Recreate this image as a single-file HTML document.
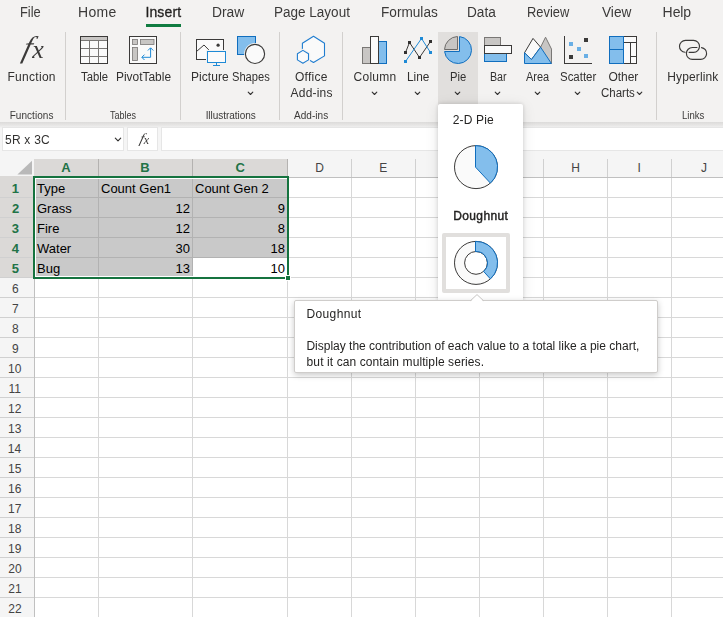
<!DOCTYPE html>
<html lang="en">
<head>
<meta charset="utf-8">
<title>Excel - Insert Doughnut chart</title>
<style>
html,body{margin:0;padding:0;}
body{width:723px;height:617px;overflow:hidden;position:relative;background:#fff;font-family:"Liberation Sans",sans-serif;}
.abs{position:absolute;}
#ui{position:absolute;left:0;top:0;width:723px;height:617px;will-change:transform;}
.t{position:absolute;white-space:pre;font-family:"Liberation Sans",sans-serif;}
#chrome{position:absolute;left:0;top:0;width:723px;height:122px;background:#f3f2f1;}
#shadow{position:absolute;left:0;top:122px;width:723px;height:6px;background:linear-gradient(#dcdbda,#e6e5e4 50%,#f3f3f3);z-index:0;}
#fbar{position:absolute;left:0;top:126px;width:723px;height:34px;background:#f5f5f5;}
.wbox{position:absolute;background:#fff;top:127px;height:24px;box-sizing:border-box;border:1px solid #e6e6e6;}
.fx{font-family:"Liberation Serif",serif !important;font-style:italic;color:#3b3a39;}
.sep{position:absolute;top:32px;width:1px;height:88px;background:#d2d0ce;}
#tabline{position:absolute;left:145.6px;top:23.6px;width:35.6px;height:3px;background:#107c41;}
#piebg{position:absolute;left:438px;top:32px;width:40px;height:73px;background:#e1dfdd;}
#colhdr{position:absolute;left:0;top:159px;width:723px;height:18px;background:#f5f5f5;}
#rowhdr{position:absolute;left:0;top:159px;width:34px;height:458px;background:#f5f5f5;}
#selcol{position:absolute;left:34px;top:159px;width:254px;height:18px;background:#dbd9d7;}
#selrow{position:absolute;left:0;top:176px;width:34px;height:102px;background:#dbd9d7;}
#grid{position:absolute;left:0;top:0;}
.c{position:absolute;white-space:pre;font-family:"Liberation Sans",sans-serif;font-size:13px;line-height:20px;color:#000;}
#panel{position:absolute;left:438px;top:104px;width:85px;height:197px;background:#fff;border-radius:2px 2px 0 0;box-shadow:0 0 4px rgba(0,0,0,.16),0 2px 14px rgba(0,0,0,.10);}
#tip{position:absolute;left:294px;top:300px;width:364px;height:73px;background:#fff;border:1px solid #cfcdcb;box-sizing:border-box;border-radius:2px;box-shadow:0 2px 6px rgba(0,0,0,.22);}
#dsel{position:absolute;left:442px;top:233px;width:68px;height:60px;box-sizing:border-box;border:4px solid #e1dfdd;background:#fff;border-radius:2px;}
</style>
</head>
<body>
<div id="chrome"></div>
<div id="fbar"></div>
<div id="shadow"></div>
<div id="colhdr"></div>
<div id="rowhdr"></div>
<div id="selcol"></div>
<div id="selrow"></div>
<svg id="grid" class="abs" width="723" height="617" viewBox="0 0 723 617" shape-rendering="crispEdges">
<rect x="98" y="178" width="1" height="439" fill="#d8d8d8"/>
<rect x="192" y="178" width="1" height="439" fill="#d8d8d8"/>
<rect x="287" y="178" width="1" height="439" fill="#d8d8d8"/>
<rect x="351" y="178" width="1" height="439" fill="#d8d8d8"/>
<rect x="415" y="178" width="1" height="439" fill="#d8d8d8"/>
<rect x="479" y="178" width="1" height="439" fill="#d8d8d8"/>
<rect x="543" y="178" width="1" height="439" fill="#d8d8d8"/>
<rect x="607" y="178" width="1" height="439" fill="#d8d8d8"/>
<rect x="671" y="178" width="1" height="439" fill="#d8d8d8"/>
<rect x="34" y="197" width="689" height="1" fill="#d8d8d8"/>
<rect x="34" y="217" width="689" height="1" fill="#d8d8d8"/>
<rect x="34" y="237" width="689" height="1" fill="#d8d8d8"/>
<rect x="34" y="257" width="689" height="1" fill="#d8d8d8"/>
<rect x="34" y="277" width="689" height="1" fill="#d8d8d8"/>
<rect x="34" y="297" width="689" height="1" fill="#d8d8d8"/>
<rect x="34" y="317" width="689" height="1" fill="#d8d8d8"/>
<rect x="34" y="337" width="689" height="1" fill="#d8d8d8"/>
<rect x="34" y="357" width="689" height="1" fill="#d8d8d8"/>
<rect x="34" y="377" width="689" height="1" fill="#d8d8d8"/>
<rect x="34" y="397" width="689" height="1" fill="#d8d8d8"/>
<rect x="34" y="417" width="689" height="1" fill="#d8d8d8"/>
<rect x="34" y="437" width="689" height="1" fill="#d8d8d8"/>
<rect x="34" y="457" width="689" height="1" fill="#d8d8d8"/>
<rect x="34" y="477" width="689" height="1" fill="#d8d8d8"/>
<rect x="34" y="497" width="689" height="1" fill="#d8d8d8"/>
<rect x="34" y="517" width="689" height="1" fill="#d8d8d8"/>
<rect x="34" y="537" width="689" height="1" fill="#d8d8d8"/>
<rect x="34" y="557" width="689" height="1" fill="#d8d8d8"/>
<rect x="34" y="577" width="689" height="1" fill="#d8d8d8"/>
<rect x="34" y="597" width="689" height="1" fill="#d8d8d8"/>
<rect x="34" y="617" width="689" height="1" fill="#d8d8d8"/>
<rect x="35" y="178" width="252" height="99" fill="#fff"/>
<rect x="36" y="179" width="251" height="97" fill="#c9c9c9"/>
<rect x="193" y="258" width="94" height="18" fill="#fff"/>
<rect x="98" y="179" width="1" height="97" fill="#b2b2b2"/>
<rect x="192" y="179" width="1" height="97" fill="#b2b2b2"/>
<rect x="36" y="197" width="251" height="1" fill="#b2b2b2"/>
<rect x="36" y="217" width="251" height="1" fill="#b2b2b2"/>
<rect x="36" y="237" width="251" height="1" fill="#b2b2b2"/>
<rect x="36" y="257" width="251" height="1" fill="#b2b2b2"/>
<rect x="193" y="257" width="94" height="1" fill="#b2b2b2"/>
<rect x="98" y="159" width="1" height="18" fill="#b4b2b0"/>
<rect x="192" y="159" width="1" height="18" fill="#b4b2b0"/>
<rect x="287" y="159" width="1" height="18" fill="#b4b2b0"/>
<rect x="351" y="159" width="1" height="18" fill="#d0d0d0"/>
<rect x="415" y="159" width="1" height="18" fill="#d0d0d0"/>
<rect x="479" y="159" width="1" height="18" fill="#d0d0d0"/>
<rect x="543" y="159" width="1" height="18" fill="#d0d0d0"/>
<rect x="607" y="159" width="1" height="18" fill="#d0d0d0"/>
<rect x="671" y="159" width="1" height="18" fill="#d0d0d0"/>
<rect x="0" y="197" width="34" height="1" fill="#d0d0d0"/>
<rect x="0" y="217" width="34" height="1" fill="#d0d0d0"/>
<rect x="0" y="237" width="34" height="1" fill="#d0d0d0"/>
<rect x="0" y="257" width="34" height="1" fill="#d0d0d0"/>
<rect x="0" y="277" width="34" height="1" fill="#d0d0d0"/>
<rect x="0" y="297" width="34" height="1" fill="#d0d0d0"/>
<rect x="0" y="317" width="34" height="1" fill="#d0d0d0"/>
<rect x="0" y="337" width="34" height="1" fill="#d0d0d0"/>
<rect x="0" y="357" width="34" height="1" fill="#d0d0d0"/>
<rect x="0" y="377" width="34" height="1" fill="#d0d0d0"/>
<rect x="0" y="397" width="34" height="1" fill="#d0d0d0"/>
<rect x="0" y="417" width="34" height="1" fill="#d0d0d0"/>
<rect x="0" y="437" width="34" height="1" fill="#d0d0d0"/>
<rect x="0" y="457" width="34" height="1" fill="#d0d0d0"/>
<rect x="0" y="477" width="34" height="1" fill="#d0d0d0"/>
<rect x="0" y="497" width="34" height="1" fill="#d0d0d0"/>
<rect x="0" y="517" width="34" height="1" fill="#d0d0d0"/>
<rect x="0" y="537" width="34" height="1" fill="#d0d0d0"/>
<rect x="0" y="557" width="34" height="1" fill="#d0d0d0"/>
<rect x="0" y="577" width="34" height="1" fill="#d0d0d0"/>
<rect x="0" y="597" width="34" height="1" fill="#d0d0d0"/>
<rect x="0" y="617" width="34" height="1" fill="#d0d0d0"/>
<rect x="34" y="279" width="1" height="338" fill="#c0c0c0"/>
<rect x="34" y="177" width="689" height="1" fill="#c0c0c0"/>
<polygon points="32,160.8 32,174.6 17.4,174.6" fill="#b9b9b9" shape-rendering="geometricPrecision"/>
<rect x="34" y="177" width="254" height="101" fill="none" stroke="#15733f" stroke-width="2"/>
<rect x="285" y="275" width="6" height="6" fill="#fff"/>
<rect x="286" y="276" width="4" height="4" fill="#15733f"/>
</svg>
<span class="c" style="left:37px;top:179px">Type</span>
<span class="c" style="left:101px;top:179px">Count Gen1</span>
<span class="c" style="left:195px;top:179px">Count Gen 2</span>
<span class="c" style="left:37px;top:199px">Grass</span>
<span class="c" style="right:533px;top:199px">12</span>
<span class="c" style="right:438px;top:199px">9</span>
<span class="c" style="left:37px;top:219px">Fire</span>
<span class="c" style="right:533px;top:219px">12</span>
<span class="c" style="right:438px;top:219px">8</span>
<span class="c" style="left:37px;top:239px">Water</span>
<span class="c" style="right:533px;top:239px">30</span>
<span class="c" style="right:438px;top:239px">18</span>
<span class="c" style="left:37px;top:259px">Bug</span>
<span class="c" style="right:533px;top:259px">13</span>
<span class="c" style="right:438px;top:259px">10</span>
<span class="t" style="left:315.13px;top:162.34px;font-size:12px;line-height:12px;font-weight:400;color:#444;letter-spacing:0.000px">D</span>
<span class="t" style="left:379.25px;top:162.34px;font-size:12px;line-height:12px;font-weight:400;color:#444;letter-spacing:0.000px">E</span>
<span class="t" style="left:443.62px;top:162.34px;font-size:12px;line-height:12px;font-weight:400;color:#444;letter-spacing:0.000px">F</span>
<span class="t" style="left:507.01px;top:162.34px;font-size:12px;line-height:12px;font-weight:400;color:#444;letter-spacing:0.000px">G</span>
<span class="t" style="left:571.17px;top:162.34px;font-size:12px;line-height:12px;font-weight:400;color:#444;letter-spacing:0.000px">H</span>
<span class="t" style="left:637.51px;top:162.34px;font-size:12px;line-height:12px;font-weight:400;color:#444;letter-spacing:0.000px">I</span>
<span class="t" style="left:700.94px;top:162.34px;font-size:12px;line-height:12px;font-weight:400;color:#444;letter-spacing:0.000px">J</span>
<span class="t" style="left:61.31px;top:160.60px;font-size:13px;line-height:13px;font-weight:700;color:#217346;letter-spacing:0.000px">A</span>
<span class="t" style="left:140.19px;top:160.60px;font-size:13px;line-height:13px;font-weight:700;color:#217346;letter-spacing:0.000px">B</span>
<span class="t" style="left:235.40px;top:160.60px;font-size:13px;line-height:13px;font-weight:700;color:#217346;letter-spacing:0.000px">C</span>
<span class="t" style="left:11.69px;top:181.50px;font-size:13px;line-height:13px;font-weight:700;color:#217346;letter-spacing:0.000px">1</span>
<span class="t" style="left:11.88px;top:201.50px;font-size:13px;line-height:13px;font-weight:700;color:#217346;letter-spacing:0.000px">2</span>
<span class="t" style="left:11.79px;top:221.50px;font-size:13px;line-height:13px;font-weight:700;color:#217346;letter-spacing:0.000px">3</span>
<span class="t" style="left:11.71px;top:241.50px;font-size:13px;line-height:13px;font-weight:700;color:#217346;letter-spacing:0.000px">4</span>
<span class="t" style="left:11.74px;top:261.50px;font-size:13px;line-height:13px;font-weight:700;color:#217346;letter-spacing:0.000px">5</span>
<span class="t" style="left:12.06px;top:283.14px;font-size:12px;line-height:12px;font-weight:400;color:#444;letter-spacing:0.000px">6</span>
<span class="t" style="left:12.08px;top:303.14px;font-size:12px;line-height:12px;font-weight:400;color:#444;letter-spacing:0.000px">7</span>
<span class="t" style="left:12.08px;top:323.14px;font-size:12px;line-height:12px;font-weight:400;color:#444;letter-spacing:0.000px">8</span>
<span class="t" style="left:12.06px;top:343.14px;font-size:12px;line-height:12px;font-weight:400;color:#444;letter-spacing:0.000px">9</span>
<span class="t" style="left:8.07px;top:363.14px;font-size:12px;line-height:12px;font-weight:400;color:#444;letter-spacing:0.000px">10</span>
<span class="t" style="left:8.54px;top:383.14px;font-size:12px;line-height:12px;font-weight:400;color:#444;letter-spacing:0.000px">11</span>
<span class="t" style="left:8.04px;top:403.14px;font-size:12px;line-height:12px;font-weight:400;color:#444;letter-spacing:0.000px">12</span>
<span class="t" style="left:8.07px;top:423.14px;font-size:12px;line-height:12px;font-weight:400;color:#444;letter-spacing:0.000px">13</span>
<span class="t" style="left:7.85px;top:443.14px;font-size:12px;line-height:12px;font-weight:400;color:#444;letter-spacing:0.000px">14</span>
<span class="t" style="left:8.07px;top:463.14px;font-size:12px;line-height:12px;font-weight:400;color:#444;letter-spacing:0.000px">15</span>
<span class="t" style="left:8.08px;top:483.14px;font-size:12px;line-height:12px;font-weight:400;color:#444;letter-spacing:0.000px">16</span>
<span class="t" style="left:8.04px;top:503.14px;font-size:12px;line-height:12px;font-weight:400;color:#444;letter-spacing:0.000px">17</span>
<span class="t" style="left:8.07px;top:523.14px;font-size:12px;line-height:12px;font-weight:400;color:#444;letter-spacing:0.000px">18</span>
<span class="t" style="left:8.04px;top:543.14px;font-size:12px;line-height:12px;font-weight:400;color:#444;letter-spacing:0.000px">19</span>
<span class="t" style="left:8.29px;top:563.14px;font-size:12px;line-height:12px;font-weight:400;color:#444;letter-spacing:0.000px">20</span>
<span class="t" style="left:8.25px;top:583.14px;font-size:12px;line-height:12px;font-weight:400;color:#444;letter-spacing:0.000px">21</span>
<span class="t" style="left:8.25px;top:603.14px;font-size:12px;line-height:12px;font-weight:400;color:#444;letter-spacing:0.000px">22</span>
<div id="ui">
<div id="tabline"></div>
<div id="piebg"></div>
<div class="sep" style="left:65px"></div>
<div class="sep" style="left:180px"></div>
<div class="sep" style="left:279px"></div>
<div class="sep" style="left:342px"></div>
<div class="sep" style="left:656px"></div>
<div class="wbox" style="left:2px;width:122px"></div>
<div class="wbox" style="left:127px;width:31px"></div>
<div class="wbox" style="left:161px;width:564px"></div>
<span class="t fx" style="left:28px;top:32px;font-size:30px;line-height:30px;transform:skewX(-15deg);transform-origin:0 0">f</span><span class="t fx" style="left:32.2px;top:37px;font-size:26px;line-height:26px">x</span>
<span class="t fx" style="left:141.6px;top:132px;font-size:14px;line-height:14px;transform:skewX(-15deg);transform-origin:0 0">f</span><span class="t fx" style="left:143.7px;top:134.4px;font-size:12px;line-height:12px">x</span>
<svg class="abs" style="left:0;top:0" width="723" height="126" viewBox="0 0 723 126" fill="none">
<!-- Table -->
<g>
<rect x="80.5" y="36.5" width="27" height="27" fill="#fafafa" stroke="#3b3a39"/>
<rect x="81" y="37" width="26" height="3.5" fill="#c8c6c4"/>
<path d="M81 40.5H107M81 48.5H107M81 56.5H107M89.5 41V63M98.5 41V63" stroke="#797775" stroke-width="1"/>
<rect x="80.5" y="36.5" width="27" height="27" stroke="#3b3a39"/>
</g>
<!-- PivotTable -->
<g>
<rect x="129.5" y="36.5" width="27" height="27" fill="#fafafa" stroke="#3b3a39"/>
<rect x="132.5" y="39.5" width="5" height="5" fill="#c8c6c4" stroke="#797775" stroke-width=".8"/>
<rect x="140.5" y="39.5" width="13.5" height="5" fill="#c8c6c4" stroke="#797775" stroke-width=".8"/>
<rect x="132.5" y="47.5" width="5" height="13" fill="#c8c6c4" stroke="#797775" stroke-width=".8"/>
<path d="M142 57.3H150.6V48M144.5 54.6L141.8 57.3L144.5 60M147.9 50.5L150.6 47.8L153.3 50.5" stroke="#1e8ad6" stroke-width="1"/>
</g>
<!-- Picture -->
<g>
<rect x="196.5" y="39.5" width="27" height="20" fill="#fafafa" stroke="#3b3a39"/>
<path d="M196.5 51.5L204 45L208.8 49.9" stroke="#3b3a39" stroke-width="1"/>
<circle cx="218.1" cy="45.2" r="1.6" fill="#3b3a39"/>
<rect x="206" y="50" width="21.5" height="14" fill="#f3f2f1"/>
<rect x="207.5" y="51.5" width="18" height="11" fill="#fafafa" stroke="#1e8ad6"/>
<path d="M216.5 62.5V65.5M213 65.5H220" stroke="#1e8ad6" stroke-width="1"/>
</g>
<!-- Shapes -->
<g>
<rect x="237.5" y="36.5" width="18" height="18" fill="#83beec" stroke="#106ebe"/>
<circle cx="255" cy="53.9" r="10.9" fill="#f3f2f1"/>
<circle cx="255" cy="53.9" r="9.6" fill="#fafafa" stroke="#3b3a39" stroke-width="1.15"/>
</g>
<!-- Office add-ins -->
<g stroke-linejoin="round">
<path d="M313.5 36.3L324.5 43.3V55.9L313.5 62.5L302.4 55.9V43.3Z" fill="#fafafa" stroke="#1f7dd0" stroke-width="1.1"/>
<path d="M302.9 50.4L308.5 53.7V59.9L302.9 63.2L297.4 59.9V53.7Z" fill="#fafafa" stroke="#f3f2f1" stroke-width="3.4"/>
<path d="M302.9 50.4L308.5 53.7V59.9L302.9 63.2L297.4 59.9V53.7Z" fill="#fafafa" stroke="#1f7dd0" stroke-width="1.1"/>
</g>
<!-- Column -->
<g>
<rect x="362.5" y="47.5" width="8" height="16" fill="#c8c6c4" stroke="#797775"/>
<rect x="378.5" y="41.5" width="8" height="22" fill="#83beec" stroke="#106ebe"/>
<rect x="370.5" y="36.5" width="8" height="27" fill="#fafafa" stroke="#3b3a39"/>
</g>
<!-- Line -->
<g>
<path d="M405.5 52.5L409.5 42.5L419.5 57.5L430.5 41.5" stroke="#3b3a39" stroke-width="1"/>
<path d="M405.5 61.5L421.5 38.5L430.5 52.5" stroke="#1e8ad6" stroke-width="1"/>
<g fill="#323130" shape-rendering="crispEdges"><rect x="404" y="51" width="3" height="3"/><rect x="408" y="41" width="3" height="3"/><rect x="418" y="56" width="3" height="3"/><rect x="429" y="40" width="3" height="3"/></g>
<g fill="#1e8ad6" shape-rendering="crispEdges"><rect x="404" y="60" width="3" height="3"/><rect x="420" y="37" width="3" height="3"/><rect x="429" y="51" width="3" height="3"/></g>
</g>
<!-- Pie -->
<g stroke-linejoin="round">
<path d="M459.5 36.58A13.5 13.5 0 1 1 444.58 51.5H459.5Z" fill="#83beec" stroke="#106ebe" stroke-width="1"/>
<path d="M457.5 49.5V36.51A13.5 13.5 0 0 0 444.51 49.5Z" fill="#c8c6c4" stroke="#6e6c6a" stroke-width="1"/>
</g>
<!-- Bar -->
<g>
<rect x="484.5" y="37.5" width="16" height="8" fill="#c8c6c4" stroke="#797775"/>
<rect x="484.5" y="53.5" width="22" height="8" fill="#83beec" stroke="#106ebe"/>
<rect x="484.5" y="45.5" width="27" height="8" fill="#fafafa" stroke="#3b3a39"/>
</g>
<!-- Area -->
<g>
<path d="M540.6 47.2L545.55 37.2L551.5 49.1V63.5H540Z" fill="#c8c6c4" stroke="#797775" stroke-width="1" stroke-linejoin="round"/>
<path d="M524.5 52.8L533 38.4L540.6 47.2L531.5 59.5Z" fill="#fafafa" stroke="#3b3a39" stroke-width="1" stroke-linejoin="round"/>
<path d="M524.5 52.8L531.5 59.5L540.6 47.2L551.4 63.5H524.5Z" fill="#83beec" stroke="#106ebe" stroke-width="1" stroke-linejoin="miter"/>
</g>
<!-- Scatter -->
<g shape-rendering="crispEdges">
<path d="M564.5 36V63.5H592" stroke="#3b3a39" stroke-width="1"/>
<g fill="#69afe5"><rect x="569" y="42" width="4" height="4"/><rect x="577" y="47" width="4" height="4"/><rect x="584" y="54" width="4" height="4"/></g>
<g fill="#3b3a39"><rect x="584" y="38" width="4" height="4"/><rect x="569" y="55" width="4" height="4"/></g>
</g>
<!-- Other charts -->
<g>
<rect x="609.5" y="36.5" width="27" height="27" fill="#fafafa" stroke="#3b3a39"/>
<path d="M623.7 42.5H636.5M630.5 42.5V63.5M630.5 56.5H636.5" stroke="#3b3a39" stroke-width="1"/>
<rect x="609.5" y="36.5" width="14" height="27" fill="#83beec" stroke="#106ebe"/>
<path d="M609.5 49.5H623.5" stroke="#106ebe" stroke-width="1"/>
</g>
<!-- Hyperlink -->
<g stroke="#3b3a39" stroke-width="1.15" stroke-linecap="round">
<path d="M689.1 52.3H693.55A5.95 5.95 0 0 0 693.55 40.4H685.45A5.95 5.95 0 0 0 685.1 52.29"/>
<path d="M697 47.5H692.35A5.95 5.95 0 0 0 692.35 59.4H700.65A5.95 5.95 0 0 0 701.5 47.56"/>
</g>
<!-- chevrons -->
<g stroke="#323130" stroke-width="1.1" stroke-linecap="round" stroke-linejoin="round">
<path d="M248.2 92.2L250.5 94.5L252.8 92.2"/>
<path d="M372.2 92.2L374.5 94.5L376.8 92.2"/>
<path d="M415.2 92.2L417.5 94.5L419.8 92.2"/>
<path d="M455.2 92.2L457.5 94.5L459.8 92.2"/>
<path d="M495.2 92.2L497.5 94.5L499.8 92.2"/>
<path d="M535.2 92.2L537.5 94.5L539.8 92.2"/>
<path d="M575.2 92.2L577.5 94.5L579.8 92.2"/>
<path d="M637.2 92.2L639.5 94.5L641.8 92.2"/>
</g>
</svg>
<svg class="abs" style="left:111.6px;top:134.9px" width="12" height="10" viewBox="0 0 12 10" fill="none"><path d="M3.3 3.2L6 5.9L8.7 3.2" stroke="#323130" stroke-width="1.15" stroke-linecap="round" stroke-linejoin="round"/></svg>

<div id="panel"></div>
<div id="dsel"></div>
<svg class="abs" style="left:438px;top:104px" width="85" height="196" viewBox="438 104 85 196" fill="none">
<circle cx="476" cy="167.1" r="21.5" fill="#fafafa" stroke="#3b3a39" stroke-width="1"/>
<path d="M475.5 167.1V145.6A21.5 21.5 0 0 1 490.4 183.1Z" fill="#83beec" stroke="#106ebe" stroke-width="1" stroke-linejoin="round"/>
<circle cx="476" cy="262.9" r="21.5" fill="#fafafa" stroke="#3b3a39" stroke-width="1"/>
<circle cx="476" cy="262.9" r="11.4" fill="#fff" stroke="#3b3a39" stroke-width="1"/>
<path d="M475.5 241.4A21.5 21.5 0 0 1 490.4 278.9L483.6 271.4A11.4 11.4 0 0 0 475.5 251.5Z" fill="#83beec" stroke="#106ebe" stroke-width="1" stroke-linejoin="round"/>
</svg>

<div id="tip"></div>
<svg class="abs" style="left:468px;top:293px" width="18" height="9" viewBox="468 293 18 9" fill="none"><path d="M470.6 301.6L477 295L483.4 301.6Z" fill="#fff"/><path d="M470.3 300.8L477 294.6L483.7 300.8" stroke="#c8c6c4" stroke-width="1"/></svg>
<span class="t" style="left:19.62px;top:5.45px;font-size:14px;line-height:14px;font-weight:400;color:#3b3a39;letter-spacing:0.000px;transform:scaleX(0.9187);transform-origin:0 0">File</span>
<span class="t" style="left:78.12px;top:5.45px;font-size:14px;line-height:14px;font-weight:400;color:#3b3a39;letter-spacing:0.307px">Home</span>
<span class="t" style="left:145.42px;top:5.45px;font-size:14px;line-height:14px;font-weight:400;color:#201f1e;letter-spacing:0.133px;-webkit-text-stroke:0.3px #201f1e">Insert</span>
<span class="t" style="left:211.54px;top:5.45px;font-size:14px;line-height:14px;font-weight:400;color:#3b3a39;letter-spacing:0.000px;transform:scaleX(0.9897);transform-origin:0 0">Draw</span>
<span class="t" style="left:273.56px;top:5.45px;font-size:14px;line-height:14px;font-weight:400;color:#3b3a39;letter-spacing:0.000px;transform:scaleX(0.9655);transform-origin:0 0">Page Layout</span>
<span class="t" style="left:380.56px;top:5.45px;font-size:14px;line-height:14px;font-weight:400;color:#3b3a39;letter-spacing:0.000px;transform:scaleX(0.9732);transform-origin:0 0">Formulas</span>
<span class="t" style="left:466.85px;top:5.45px;font-size:14px;line-height:14px;font-weight:400;color:#3b3a39;letter-spacing:0.000px;transform:scaleX(0.9756);transform-origin:0 0">Data</span>
<span class="t" style="left:527.42px;top:5.45px;font-size:14px;line-height:14px;font-weight:400;color:#3b3a39;letter-spacing:0.000px;transform:scaleX(0.9201);transform-origin:0 0">Review</span>
<span class="t" style="left:601.73px;top:5.45px;font-size:14px;line-height:14px;font-weight:400;color:#3b3a39;letter-spacing:0.000px;transform:scaleX(0.9765);transform-origin:0 0">View</span>
<span class="t" style="left:662.62px;top:5.45px;font-size:14px;line-height:14px;font-weight:400;color:#3b3a39;letter-spacing:-0.082px">Help</span>
<span class="t" style="left:7.50px;top:70.54px;font-size:12px;line-height:12px;font-weight:400;color:#323130;letter-spacing:0.288px">Function</span>
<span class="t" style="left:81.43px;top:70.54px;font-size:12px;line-height:12px;font-weight:400;color:#323130;letter-spacing:0.000px;transform:scaleX(0.9416);transform-origin:0 0">Table</span>
<span class="t" style="left:115.51px;top:70.54px;font-size:12px;line-height:12px;font-weight:400;color:#323130;letter-spacing:0.000px;transform:scaleX(0.9939);transform-origin:0 0">PivotTable</span>
<span class="t" style="left:191.00px;top:70.54px;font-size:12px;line-height:12px;font-weight:400;color:#323130;letter-spacing:0.058px">Picture</span>
<span class="t" style="left:231.57px;top:70.54px;font-size:12px;line-height:12px;font-weight:400;color:#323130;letter-spacing:0.000px;transform:scaleX(0.9278);transform-origin:0 0">Shapes</span>
<span class="t" style="left:295.00px;top:70.54px;font-size:12px;line-height:12px;font-weight:400;color:#323130;letter-spacing:0.278px">Office</span>
<span class="t" style="left:290.56px;top:86.54px;font-size:12px;line-height:12px;font-weight:400;color:#323130;letter-spacing:0.203px">Add-ins</span>
<span class="t" style="left:353.56px;top:70.54px;font-size:12px;line-height:12px;font-weight:400;color:#323130;letter-spacing:0.246px">Column</span>
<span class="t" style="left:407.11px;top:70.54px;font-size:12px;line-height:12px;font-weight:400;color:#323130;letter-spacing:0.000px;transform:scaleX(0.9857);transform-origin:0 0">Line</span>
<span class="t" style="left:450.36px;top:70.54px;font-size:12px;line-height:12px;font-weight:400;color:#323130;letter-spacing:0.000px;transform:scaleX(0.9351);transform-origin:0 0">Pie</span>
<span class="t" style="left:490.31px;top:70.54px;font-size:12px;line-height:12px;font-weight:400;color:#323130;letter-spacing:0.000px;transform:scaleX(0.8895);transform-origin:0 0">Bar</span>
<span class="t" style="left:526.28px;top:70.54px;font-size:12px;line-height:12px;font-weight:400;color:#323130;letter-spacing:0.000px;transform:scaleX(0.9151);transform-origin:0 0">Area</span>
<span class="t" style="left:559.85px;top:70.54px;font-size:12px;line-height:12px;font-weight:400;color:#323130;letter-spacing:0.000px;transform:scaleX(0.9548);transform-origin:0 0">Scatter</span>
<span class="t" style="left:608.40px;top:70.54px;font-size:12px;line-height:12px;font-weight:400;color:#323130;letter-spacing:-0.025px">Other</span>
<span class="t" style="left:600.78px;top:86.74px;font-size:12px;line-height:12px;font-weight:400;color:#323130;letter-spacing:0.000px;transform:scaleX(0.9568);transform-origin:0 0">Charts</span>
<span class="t" style="left:667.30px;top:70.54px;font-size:12px;line-height:12px;font-weight:400;color:#323130;letter-spacing:0.114px">Hyperlink</span>
<span class="t" style="left:9.67px;top:110.94px;font-size:10px;line-height:10px;font-weight:400;color:#3b3a39;letter-spacing:0.058px">Functions</span>
<span class="t" style="left:110.21px;top:110.94px;font-size:10px;line-height:10px;font-weight:400;color:#3b3a39;letter-spacing:0.000px;transform:scaleX(0.9027);transform-origin:0 0">Tables</span>
<span class="t" style="left:205.64px;top:110.94px;font-size:10px;line-height:10px;font-weight:400;color:#3b3a39;letter-spacing:-0.038px">Illustrations</span>
<span class="t" style="left:293.99px;top:110.94px;font-size:10px;line-height:10px;font-weight:400;color:#3b3a39;letter-spacing:0.041px">Add-ins</span>
<span class="t" style="left:681.81px;top:110.94px;font-size:10px;line-height:10px;font-weight:400;color:#3b3a39;letter-spacing:0.000px;transform:scaleX(0.9552);transform-origin:0 0">Links</span>
<span class="t" style="left:5.06px;top:134.04px;font-size:12px;line-height:12px;font-weight:400;color:#323130;letter-spacing:0.217px">5R x 3C</span>
<span class="t" style="left:452.67px;top:113.84px;font-size:12px;line-height:12px;font-weight:400;color:#252423;letter-spacing:0.161px">2-D Pie</span>
<span class="t" style="left:453.24px;top:209.64px;font-size:12px;line-height:12px;font-weight:400;color:#201f1e;letter-spacing:0.370px;-webkit-text-stroke:0.42px #201f1e">Doughnut</span>
<span class="t" style="left:306.40px;top:308.04px;font-size:12px;line-height:12px;font-weight:400;color:#252423;letter-spacing:0.393px">Doughnut</span>
<span class="t" style="left:306.40px;top:339.84px;font-size:12px;line-height:12px;font-weight:400;color:#252423;letter-spacing:0.001px">Display the contribution of each value to a total like a pie chart,</span>
<span class="t" style="left:306.60px;top:355.84px;font-size:12px;line-height:12px;font-weight:400;color:#252423;letter-spacing:0.099px">but it can contain multiple series.</span>
</div>
</body>
</html>
